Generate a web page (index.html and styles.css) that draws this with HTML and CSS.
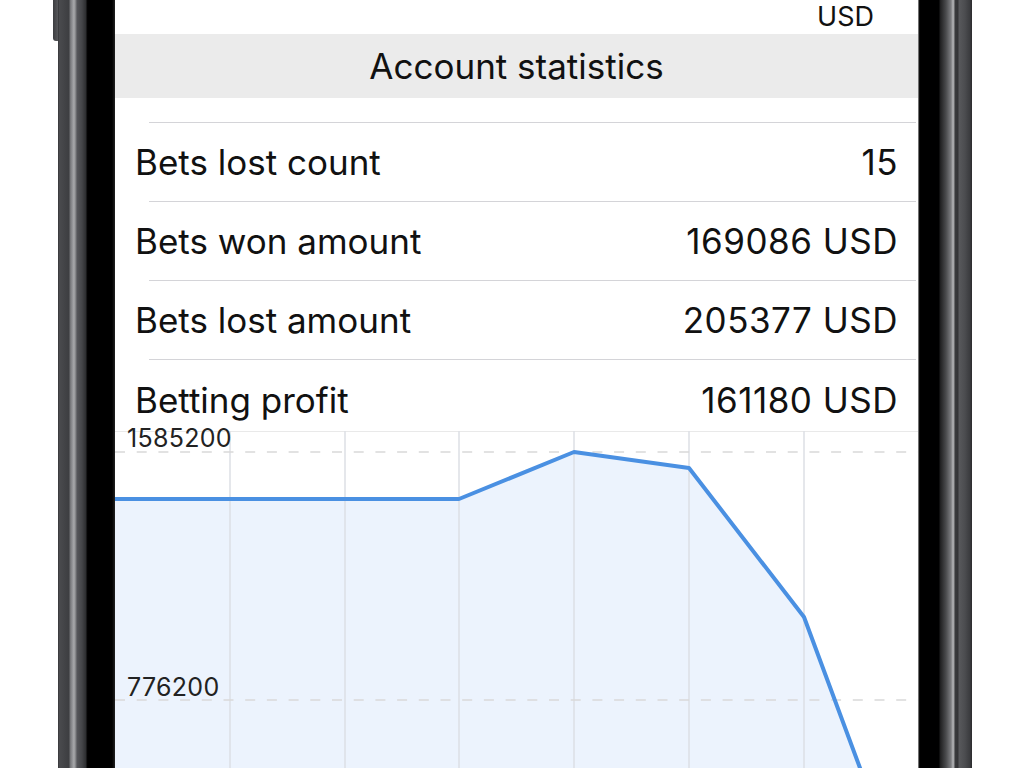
FILE: index.html
```html
<!DOCTYPE html>
<html lang="en">
<head>
<meta charset="utf-8">
<title>Account statistics</title>
<link rel="stylesheet" href="styles.css">
</head>
<body>
<div class="stage">
  <div class="gutter"></div>
  <div class="btn-col"><div class="side-btn"></div></div>
  <div class="bezel-left"></div>
  <div class="screen">
    <div class="top-cell"><span class="top-value">USD</span></div>
    <div class="section-header">Account statistics</div>
    <div class="hidden-row"></div>
    <div class="sep"></div>
    <div class="row"><span class="label">Bets lost count</span><span class="value">15</span></div>
    <div class="sep"></div>
    <div class="row"><span class="label">Bets won amount</span><span class="value">169086 USD</span></div>
    <div class="sep"></div>
    <div class="row"><span class="label">Bets lost amount</span><span class="value">205377 USD</span></div>
    <div class="sep"></div>
    <div class="row row-last"><span class="label">Betting profit</span><span class="value">161180 USD</span></div>
    <div class="chart">
      <svg class="chart-svg" width="803" height="337" viewBox="0 0 803 337" xmlns="http://www.w3.org/2000/svg">
        <polygon class="area" points="-10,68 115,68 230,68 344,68 459,21 574,37 689,186 804,496 804,600 -10,600"/>
        <line class="top-rule" x1="0" y1="0.5" x2="803" y2="0.5"/>
        <g class="vgrid">
          <line x1="115" y1="0" x2="115" y2="337"/>
          <line x1="230" y1="0" x2="230" y2="337"/>
          <line x1="344" y1="0" x2="344" y2="337"/>
          <line x1="459" y1="0" x2="459" y2="337"/>
          <line x1="574" y1="0" x2="574" y2="337"/>
          <line x1="689" y1="0" x2="689" y2="337"/>
        </g>
        <line class="dash" x1="0" y1="21" x2="803" y2="21"/>
        <line class="dash" x1="0" y1="269" x2="803" y2="269"/>
        <polyline class="series" points="-10,68 115,68 230,68 344,68 459,21 574,37 689,186 804,496"/>
        <text class="axis-label" x="12" y="16">1585200</text>
        <text class="axis-label" x="12" y="265">776200</text>
      </svg>
    </div>
  </div>
  <div class="bezel-right"></div>
</div>
</body>
</html>
```
FILE: styles.css
```css
html, body {
  margin: 0;
  padding: 0;
  background: #ffffff;
}
.stage {
  display: flex;
  width: 1024px;
  height: 768px;
  overflow: hidden;
  background: #ffffff;
  font-family: Inter, "Liberation Sans", sans-serif;
  color: #111111;
}
.gutter {
  width: 53px;
  flex: none;
}
.btn-col {
  width: 5px;
  flex: none;
}
.side-btn {
  width: 5px;
  height: 41px;
  border-bottom-left-radius: 3px;
  background: linear-gradient(to right, #3c3d40, #57585b);
}
.bezel-left {
  width: 57px;
  flex: none;
  background: linear-gradient(to right,
    #2c2d2f 0px, #4a4b4e 1px, #3d3e41 11px,
    #6f7073 12px, #8e8f92 14px, #a9aaac 16px, #7a7b7e 18px,
    #55565a 19px, #444548 24px, #2c2d2f 28px,
    #050505 29px, #000000 30px, #000000 54px, #151515 56px, #222 57px);
}
.screen {
  width: 803px;
  flex: none;
  height: 768px;
  overflow: hidden;
  background: #ffffff;
  display: flex;
  flex-direction: column;
}
.top-cell {
  height: 34px;
  flex: none;
  display: flex;
  justify-content: flex-end;
  padding-right: 44px;
  font-size: 27px;
  line-height: 33px;
}
.section-header {
  height: 64px;
  flex: none;
  background: #ebebeb;
  display: flex;
  align-items: center;
  justify-content: center;
  font-size: 35px;
}
.hidden-row {
  height: 24px;
  flex: none;
}
.sep {
  height: 1px;
  flex: none;
  margin-left: 34px;
  margin-right: 2px;
  background: #d4d4d8;
}
.row {
  height: 78px;
  flex: none;
  display: flex;
  align-items: center;
  justify-content: space-between;
  padding: 0 20px;
  font-size: 35px;
}
.value {
  letter-spacing: 0.5px;
}
.row-last {
  height: 62px;
  padding-top: 9px;
}
.chart {
  height: 337px;
  flex: none;
  overflow: visible;
}
.chart-svg {
  display: block;
  overflow: visible;
}
.area {
  fill: #ecf3fd;
}
.top-rule {
  stroke: #e9e9e9;
  stroke-width: 1;
}
.vgrid line {
  stroke: #dcdfe4;
  stroke-width: 1.5;
}
.dash {
  stroke: #d9d9d9;
  stroke-width: 1.5;
  stroke-dasharray: 10 11.7;
}
.series {
  fill: none;
  stroke: #4a90e2;
  stroke-width: 4;
  stroke-linejoin: round;
}
.axis-label {
  font-family: Inter, "Liberation Sans", sans-serif;
  font-size: 25px;
  letter-spacing: 0.3px;
  fill: #222222;
}
.bezel-right {
  width: 54px;
  flex: none;
  background: linear-gradient(to right,
    #c8c8c8 0px, #1a1a1a 1px, #000000 2px, #000000 21px,
    #1e1e1f 22px, #4a4b4d 28px, #7c7d80 33px, #b3b4b6 35px, #9a9b9d 36px,
    #3a3b3d 37px, #333436 40px, #58595c 41px, #4b4c4f 47px, #3a3b3e 52px, #2a2a2c 54px);
}
```
